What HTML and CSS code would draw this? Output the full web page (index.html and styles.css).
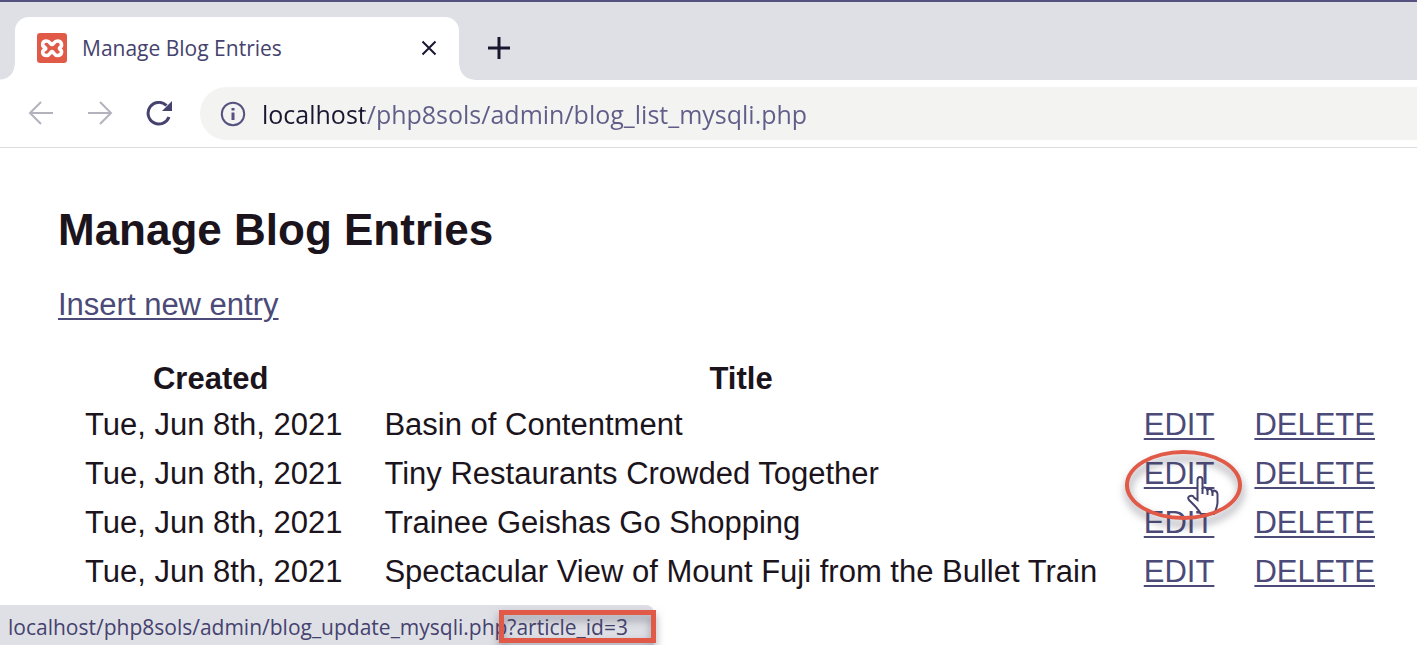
FILE: index.html
```html
<!DOCTYPE html>
<html lang="en">
<head>
<meta charset="utf-8">
<title>Manage Blog Entries</title>
<link rel="stylesheet" href="styles.css">
</head>
<body>
<header class="browser">
  <div class="tabstrip">
    <div class="tab">
      <svg class="favicon" viewBox="0 0 30 30" aria-hidden="true">
        <rect width="30" height="30" rx="3" fill="#e05a47"/>
        <path d="M15 11.500C13 11 13 8 9.500 8C5 8 4.500 13 8 14.500C9 15 9 15.800 8 16.300C4.500 18 5 22.500 9.500 22.500C13 22.500 13 19 15 18.500C17 19 17 22.500 20.500 22.500C25 22.500 25.500 18 23 16.300C22.300 15.800 22.300 15 23 14.500C25.500 13 25 8 20.500 8C17 8 17 11 15 11.500Z" fill="none" stroke="#fff" stroke-width="3.600" stroke-linejoin="round"/>
      </svg>
      <span class="tab-title">Manage Blog Entries</span>
      <button class="icon-button close" aria-label="Close tab"><svg viewBox="0 0 16 16"><path d="M1.500 1.500 14.500 14.500M14.500 1.500 1.500 14.500"/></svg></button>
    </div>
    <button class="icon-button add" aria-label="New tab"><svg viewBox="0 0 22 22"><path d="M11 0V22M0 11H22"/></svg></button>
  </div>
  <div class="toolbar">
    <button class="icon-button nav" aria-label="Back"><svg viewBox="0 0 26 26"><path d="M25 12H2M13 1 2 12 13 23"/></svg></button>
    <button class="icon-button nav" aria-label="Forward"><svg viewBox="0 0 26 26"><path d="M1 12H24M13 1 24 12 13 23"/></svg></button>
    <button class="icon-button reload" aria-label="Reload"><svg viewBox="0 0 26 26"><path d="M23 16A10.800 10.800 0 1 1 20.500 4.500"/><path class="solid" d="M26 0V10H16Z"/></svg></button>
    <div class="omnibox">
      <svg class="info" viewBox="0 0 26 26" aria-hidden="true"><circle cx="13" cy="13" r="11.200"/><path class="letter" d="M13 11.500V19M13 7V9.500"/></svg>
      <input class="url" type="text" aria-label="Address" value="localhost/php8sols/admin/blog_list_mysqli.php">
    </div>
  </div>
</header>
<main class="page">
  <h1>Manage Blog Entries</h1>
  <p class="insert"><a href="#">Insert new entry</a></p>
  <table>
    <thead>
      <tr><th class="created" scope="col">Created</th><th class="title" scope="col">Title</th><td></td><td></td></tr>
    </thead>
    <tbody>
      <tr><td>Tue, Jun 8th, 2021</td><td>Basin of Contentment</td><td><a href="#">EDIT</a></td><td><a href="#">DELETE</a></td></tr>
      <tr>
        <td>Tue, Jun 8th, 2021</td><td>Tiny Restaurants Crowded Together</td>
        <td><span class="marked"><a href="#">EDIT</a>
          <svg class="hand" viewBox="0 0 32 40" aria-hidden="true"><path d="M10.500 24V4Q10.500 1 13 1T15.500 4V13Q16 11 18 11.500T20.500 14.500Q21 12.500 23 13T25.500 16Q26.500 14 28.500 15T30.500 18V27Q30 32 27 38H14Q11 33 7 29L2 24Q0 21 3 20T7 21.500Z"/><path d="M15.500 12V18M20.500 14V19M25.500 15V20"/></svg>
          <span class="ring"></span></span></td>
        <td><a href="#">DELETE</a></td>
      </tr>
      <tr><td>Tue, Jun 8th, 2021</td><td>Trainee Geishas Go Shopping</td><td><a href="#">EDIT</a></td><td><a href="#">DELETE</a></td></tr>
      <tr><td>Tue, Jun 8th, 2021</td><td>Spectacular View of Mount Fuji from the Bullet Train</td><td><a href="#">EDIT</a></td><td><a href="#">DELETE</a></td></tr>
    </tbody>
  </table>
</main>
<div class="status">localhost/php8sols/admin/blog_update_mysqli.php<span class="query">?article_id=3</span></div>
</body>
</html>
```
FILE: styles.css
```css
* { box-sizing: border-box; }
body {
  margin: 0;
  min-height: 100vh;
  overflow: hidden;
  background: #fff;
  color: #1b141c;
  font-family: "Liberation Sans", Arial, sans-serif;
  font-size: 31px;
}
.browser, .status { font-family: "Open Sans", "Noto Sans", sans-serif; }
.tabstrip {
  display: flex;
  align-items: flex-end;
  height: 80px;
  padding-left: 15px;
  border-top: 2px solid #55527f;
  background: #dfe0e6;
}
.tab {
  position: relative;
  display: flex;
  align-items: center;
  width: 444px;
  height: 63px;
  padding: 0 22px 2px 22px;
  border-radius: 14px 14px 0 0;
  background: #fff;
}
.tab::before, .tab::after {
  content: "";
  position: absolute;
  bottom: 0;
  width: 15px;
  height: 15px;
}
.tab::before { right: 100%; background: radial-gradient(circle at 0 0, transparent 14px, #fff 15px); }
.tab::after { left: 100%; background: radial-gradient(circle at 100% 0, transparent 14px, #fff 15px); }
.favicon { width: 30px; height: 30px; margin-right: 15px; }
.tab-title { flex: 1; font-size: 21px; color: #45426e; white-space: nowrap; }
.icon-button {
  display: flex;
  flex: none;
  padding: 0;
  border: 0;
  background: none;
  color: #1b1630;
}
.icon-button svg { width: 26px; height: 26px; fill: none; stroke: currentColor; stroke-width: 3; }
.close svg { width: 16px; height: 16px; stroke-width: 2; }
.add { margin: 0 0 21px 29px; }
.add svg { width: 22px; height: 22px; }
.toolbar {
  display: flex;
  align-items: center;
  gap: 33px;
  height: 68px;
  padding-left: 28px;
  border-bottom: 1px solid #dcdce0;
}
.nav { color: #b4b3bd; }
.nav svg { stroke-width: 2; }
.reload { color: #45426e; }
.icon-button .solid { fill: currentColor; stroke: none; }
.omnibox {
  display: flex;
  flex: 1;
  align-items: center;
  gap: 16px;
  height: 53px;
  margin-left: -5px;
  padding-left: 20px;
  border-radius: 27px 0 0 27px;
  background: #f3f3f2;
}
.info { width: 26px; height: 26px; fill: none; stroke: #55527f; stroke-width: 2; }
.info .letter { stroke-width: 3; }
.url {
  flex: 1;
  min-width: 0;
  padding: 0;
  border: 0;
  outline: 0;
  font: inherit;
  font-size: 25px;
  color: transparent;
  background: linear-gradient(90deg, #1b1630 102px, #605d88 102px);
  background-clip: text;
}
.page { padding: 52px 22px 0 58px; }
h1 { margin: 0; font-size: 44px; line-height: 60px; }
a { color: #4b4a78; text-decoration-thickness: 2px; text-underline-offset: 3px; }
.insert { margin: 26px 0 0; line-height: 38px; }
table { width: calc(100% - 7px); margin: 34px 0 0 7px; border-collapse: collapse; }
th, td { padding: 0 20px; line-height: 49px; text-align: left; white-space: nowrap; }
th { line-height: 42px; text-align: center; }
.created { padding-right: 28px; }
td:first-child { padding-right: 22px; }
.title { width: 100%; padding-right: 26px; }
.marked { position: relative; display: inline-block; }
.ring {
  position: absolute;
  inset: 1px -28px -22px -19px;
  border: 4px solid #e05a47;
  border-radius: 50%;
  filter: drop-shadow(1px 6px 4px rgba(60, 60, 80, 0.6));
}
.hand {
  position: absolute;
  left: 43px;
  top: 27px;
  width: 32px;
  height: 40px;
  fill: #fff;
  stroke: #45426e;
  stroke-width: 2;
}
.status {
  position: fixed;
  bottom: 0;
  left: 0;
  height: 40px;
  padding: 4px 26px 0 8px;
  border-top-right-radius: 8px;
  background: #dfe0e6;
  color: #45426e;
  font-size: 21px;
  line-height: 36px;
  white-space: nowrap;
}
.query { position: relative; }
.query::after {
  content: "";
  position: absolute;
  inset: -3px -28px -2px -8px;
  border: 5px solid #e05a47;
  filter: drop-shadow(0 5px 4px rgba(60, 60, 80, 0.5));
}
```
